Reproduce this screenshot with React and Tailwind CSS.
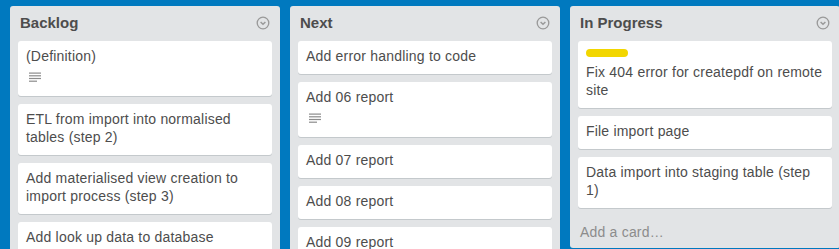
const LISTS = [
  {
    id: "backlog",
    title: "Backlog",
    cards: [
      { text: "(Definition)", desc: true },
      { text: "ETL from import into normalised tables (step 2)" },
      { text: "Add materialised view creation to import process (step 3)" },
      { text: "Add look up data to database" },
      { text: "Add user roles" },
    ],
  },
  {
    id: "next",
    title: "Next",
    cards: [
      { text: "Add error handling to code" },
      { text: "Add 06 report", desc: true },
      { text: "Add 07 report" },
      { text: "Add 08 report" },
      { text: "Add 09 report" },
    ],
  },
  {
    id: "progress",
    title: "In Progress",
    footer: true,
    cards: [
      { text: "Fix 404 error for createpdf on remote site", label: "bg-[#f2d600]" },
      { text: "File import page" },
      { text: "Data import into staging table (step 1)" },
    ],
  },
]

function DescIcon() {
  return (
    <svg width="12" height="11" viewBox="0 0 12 11" className="block">
      <rect x="0" y="0.5" width="12" height="1.2" fill="#8c8c8c" />
      <rect x="0" y="3.2" width="12" height="1.2" fill="#8c8c8c" />
      <rect x="0" y="5.9" width="12" height="1.2" fill="#8c8c8c" />
      <rect x="0" y="8.6" width="8" height="1.2" fill="#8c8c8c" />
    </svg>
  )
}

function MenuIcon() {
  return (
    <svg width="14" height="14" viewBox="0 0 14 14" className="block">
      <circle cx="7" cy="7" r="5.8" fill="none" stroke="#999" strokeWidth="1.3" />
      <path d="M4.6 6 L7 8.3 L9.4 6" fill="none" stroke="#999" strokeWidth="1.5" />
    </svg>
  )
}

function Card({ card }) {
  return (
    <div className="bg-white rounded-[3px] shadow-[0_1px_0_#c4c9cc] px-2 pt-[6px] pb-[9px] mb-2">
      {card.label && <div className={`w-[42px] h-2 rounded-[4px] mt-[2px] mb-[6px] ${card.label}`} />}
      <div className="text-[14px] leading-[18px] tracking-[0.2px] text-[#4d4d4d]">{card.text}</div>
      {card.desc && (
        <div className="h-[22px] pt-[7px] pl-[3px]">
          <DescIcon />
        </div>
      )}
    </div>
  )
}

export default function App() {
  return (
    <div
      className="w-[839px] h-[249px] overflow-hidden bg-[#0079bf] flex gap-[10px] pl-[10px] pt-[6px]"
      style={{ fontFamily: '"Liberation Sans", Arial, sans-serif' }}
    >
      {LISTS.map((list) => (
        <div key={list.id} className="w-[270px] shrink-0 self-start bg-[#e2e4e6] rounded-[3px]">
          <div className="flex items-center justify-between pl-[10px] pr-[10px] pt-[8px] h-[35px] pb-[9px]">
            <div className="text-[15px] font-bold leading-[18px] text-[#4d4d4d]">{list.title}</div>
            <MenuIcon />
          </div>
          <div className="px-2">
            {list.cards.map((c, i) => (
              <Card key={i} card={c} />
            ))}
          </div>
          {list.footer && (
            <div className="px-[10px] pt-[7px] pb-[7px] text-[14px] leading-[18px] tracking-[0.2px] text-[#8c8c8c]">
              Add a card…
            </div>
          )}
        </div>
      ))}
    </div>
  )
}
